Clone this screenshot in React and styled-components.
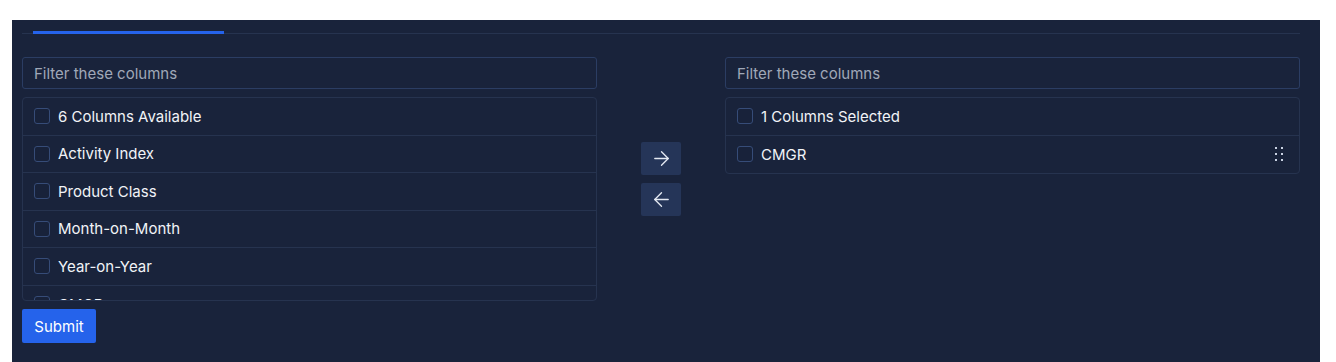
import React from 'react'
import styled, { createGlobalStyle } from 'styled-components'
import { ArrowRight, ArrowLeft } from 'lucide-react'

const available = ['Activity Index', 'Product Class', 'Month-on-Month', 'Year-on-Year', 'CMGR']
const selected = ['CMGR']

const App = () => {
  return (
    <>
      <GlobalStyle />
      <Page>
        <Panel>
          <TabBar>
            <TabIndicator />
          </TabBar>
          <Columns>
            <Side>
              <Filter placeholder='Filter these columns' />
              <List $height={204}>
                <Row>
                  <Check />
                  <Label>{available.length + 1} Columns Available</Label>
                </Row>
                {available.map(name => (
                  <Row key={name}>
                    <Check />
                    <Label>{name}</Label>
                  </Row>
                ))}
              </List>
            </Side>
            <Middle>
              <MoveButton><ArrowRight size={23} strokeWidth={1.4} /></MoveButton>
              <MoveButton><ArrowLeft size={23} strokeWidth={1.4} /></MoveButton>
            </Middle>
            <Side>
              <Filter placeholder='Filter these columns' />
              <List>
                <Row>
                  <Check />
                  <Label>{selected.length} Columns Selected</Label>
                </Row>
                {selected.map(name => (
                  <Row key={name}>
                    <Check />
                    <Label>{name}</Label>
                    <Handle width='10' height='16' viewBox='0 0 10 16'>
                      {[2, 8].map(x =>
                        [2, 8, 14].map(y => (
                          <rect key={x + '-' + y} x={x - 1} y={y - 1} width='2' height='2' fill='#c9d2e3' />
                        ))
                      )}
                    </Handle>
                  </Row>
                ))}
              </List>
            </Side>
          </Columns>
          <Submit>Submit</Submit>
        </Panel>
      </Page>
    </>
  )
}

export default App

const GlobalStyle = createGlobalStyle`
  body {
    margin: 0;
    background: #fff;
    font-family: Inter, "Liberation Sans", sans-serif;
  }
`;

const Page = styled.div`
  padding: 20px 16px 0 12px;
  height: 362px;
  box-sizing: border-box;
  overflow: hidden;
`;

const Panel = styled.div`
  background: #19233b;
  height: 100%;
  padding: 0 20px 0 10px;
  box-sizing: border-box;
`;

const TabBar = styled.div`
  height: 14px;
  border-bottom: 1px solid #26334f;
  box-sizing: border-box;
  position: relative;
`;

const TabIndicator = styled.div`
  position: absolute;
  left: 11px;
  bottom: -1px;
  width: 191px;
  height: 3px;
  background: #2563eb;
`;

const Columns = styled.div`
  display: grid;
  grid-template-columns: 575px 1fr 575px;
  margin-top: 23px;
`;

const Side = styled.div`
  display: flex;
  flex-direction: column;
  gap: 8px;
`;

const Filter = styled.input`
  height: 32px;
  box-sizing: border-box;
  background: #19233b;
  border: 1px solid #2b3d63;
  border-radius: 3px;
  padding: 0 11px;
  font: 15px Inter, "Liberation Sans", sans-serif;
  color: #e5e7eb;
  outline: none;
  &::placeholder {
    color: #a0a8b8;
  }
`;

const List = styled.div`
  border: 1px solid #26334f;
  border-radius: 4px;
  height: ${p => (p.$height ? p.$height + 'px' : 'auto')};
  box-sizing: border-box;
  overflow: hidden;
`;

const Row = styled.div`
  display: flex;
  align-items: center;
  gap: 8px;
  height: 37.5px;
  padding: 0 11px;
  box-sizing: border-box;
  border-bottom: 1px solid #26334f;
  &:last-child {
    border-bottom: none;
  }
`;

const Check = styled.span`
  width: 16px;
  height: 16px;
  box-sizing: border-box;
  border: 1px solid #364c78;
  border-radius: 3px;
  background: #18223a;
  flex: none;
`;

const Label = styled.span`
  font-size: 15px;
  color: #f1f3f7;
  flex: 1;
`;

const Handle = styled.svg`
  margin-right: 4px;
`;

const Middle = styled.div`
  display: flex;
  flex-direction: column;
  align-items: center;
  justify-content: center;
  gap: 8px;
`;

const MoveButton = styled.button`
  width: 40px;
  height: 33px;
  border: none;
  border-radius: 2px;
  background: #253558;
  color: #e4e9f2;
  padding: 0;
  display: flex;
  align-items: center;
  justify-content: center;
`;

const Submit = styled.button`
  margin-top: 8px;
  width: 74px;
  height: 34px;
  border: none;
  border-radius: 2px;
  background: #2563eb;
  color: #fff;
  font: 15px Inter, "Liberation Sans", sans-serif;
  padding: 0;
`;
